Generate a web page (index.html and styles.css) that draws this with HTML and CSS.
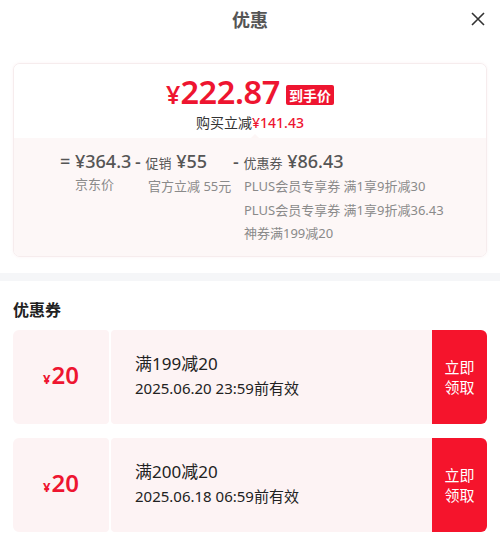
FILE: index.html
```html
<!DOCTYPE html>
<html lang="zh-CN">
<head>
    <meta charset="UTF-8">
    <meta name="viewport" content="width=device-width, initial-scale=1.0">
    <title>优惠</title>
    <link rel="stylesheet" href="styles.css">
</head>
<body>
    <div class="header">
        <h1>优惠</h1>
        <svg class="close" width="16" height="16" viewBox="0 0 16 16">
            <path d="M2 2 L14 14 M14 2 L2 14" stroke="#333" stroke-width="1.6" fill="none"/>
        </svg>
    </div>

    <div class="summary">
        <div class="summary-top">
            <div class="final">
                <span class="yen">¥</span><span class="amount">222.87</span>
                <span class="badge">到手价</span>
            </div>
            <div class="saved">购买立减<span class="red">¥141.43</span></div>
        </div>
        <div class="summary-bottom">
            <div class="calc">
                <div class="col col-jd">
                    <div class="main">= ¥364.3</div>
                    <div class="sub">京东价</div>
                </div>
                <div class="col col-promo">
                    <div class="main">- <small>促销</small> ¥55</div>
                    <div class="sub">官方立减 55元</div>
                </div>
                <div class="col col-coupon">
                    <div class="main">- <small>优惠券</small> ¥86.43</div>
                    <div class="sub">PLUS会员专享券 满1享9折减30</div>
                    <div class="sub">PLUS会员专享券 满1享9折减36.43</div>
                    <div class="sub">神券满199减20</div>
                </div>
            </div>
        </div>
    </div>

    <div class="band"></div>

    <h2>优惠券</h2>

    <div class="coupon">
        <div class="coupon-value"><span class="y">¥</span>20</div>
        <div class="coupon-info">
            <div class="rule">满199减20</div>
            <div class="expire">2025.06.20 23:59前有效</div>
        </div>
        <div class="coupon-btn">立即<br>领取</div>
    </div>

    <div class="coupon">
        <div class="coupon-value"><span class="y">¥</span>20</div>
        <div class="coupon-info">
            <div class="rule">满200减20</div>
            <div class="expire">2025.06.18 06:59前有效</div>
        </div>
        <div class="coupon-btn">立即<br>领取</div>
    </div>
</body>
</html>
```

FILE: styles.css
```css
body {
    margin: 0;
    background: #fff;
    font-family: "Noto Sans", "Noto Sans CJK SC", sans-serif;
    color: #222;
    width: 500px;
}
.header {
    height: 38px;
    display: flex;
    align-items: center;
    justify-content: center;
    position: relative;
}
.header h1 {
    margin: 0;
    font-size: 18px;
    font-weight: bold;
    color: #555;
    font-family: "Noto Sans CJK SC", sans-serif;
}
.close {
    position: absolute;
    right: 14px;
    top: 11px;
}
.summary {
    margin: 25px 13px 0;
    border: 1px solid #f6eced;
    border-radius: 7px;
    overflow: hidden;
    box-shadow: 0 0 3px rgba(240, 200, 205, 0.25);
}
.summary-top {
    height: 74px;
    display: flex;
    flex-direction: column;
    align-items: center;
    background: #fff;
    position: relative;
}
.summary-top::after {
    content: "";
    position: absolute;
    bottom: 0;
    left: 237px;
    border: 4px solid transparent;
    border-bottom-color: #fdf6f6;
}
.final {
    display: flex;
    align-items: baseline;
    color: #ee1530;
    margin-top: 11px;
    height: 34px;
    line-height: 34px;
}
.final .yen {
    font-size: 25px;
    font-weight: 600;
}
.final .amount {
    font-size: 32.5px;
    font-weight: 600;
    letter-spacing: -0.4px;
}
.badge {
    background: #ee1530;
    color: #fff;
    font-family: "Noto Sans CJK SC", sans-serif;
    font-weight: bold;
    font-size: 14px;
    line-height: 20px;
    padding: 0 3px;
    border-radius: 2px;
    margin-left: 6px;
    position: relative;
    top: -3px;
}
.saved {
    margin-top: 4px;
    font-size: 14px;
    color: #333;
    line-height: 20px;
}
.red {
    color: #ee1530;
    font-weight: 500;
}
.summary-bottom {
    background: #fdf7f7;
    padding: 11px 0 10px;
}
.calc {
    display: flex;
    padding-left: 46px;
}
.col .main {
    font-size: 18px;
    font-weight: 500;
    color: #555;
    line-height: 24px;
    white-space: nowrap;
}
.col .main small {
    font-size: 13px;
    font-weight: normal;
}
.col .sub {
    font-size: 13px;
    color: #8a8a8a;
    line-height: 23.5px;
    white-space: nowrap;
}
.col-jd {
    width: 75px;
}
.col-jd .sub {
    padding-left: 15px;
}
.col-promo {
    width: 98px;
}
.col-promo .sub {
    padding-left: 13px;
}
.col-coupon .sub {
    padding-left: 11px;
}
.band {
    height: 8px;
    background: #f5f6f8;
    margin-top: 16px;
}
h2 {
    margin: 17px 13px 10px;
    font-size: 16px;
    font-weight: bold;
    color: #222;
    font-family: "Noto Sans CJK SC", sans-serif;
    line-height: 22px;
}
.coupon {
    margin: 0 13px 14px;
    height: 94px;
    display: flex;
    gap: 2px;
}
.coupon-value {
    width: 96px;
    background: #fdf3f4;
    border-radius: 6px 4px 4px 6px;
    display: flex;
    align-items: baseline;
    justify-content: center;
    padding-top: 28px;
    box-sizing: border-box;
    color: #ee1530;
    font-size: 24px;
    font-weight: 600;
}
.coupon-value .y {
    font-size: 13px;
    font-weight: bold;
    margin-right: 1px;
}
.coupon-info {
    flex: 1;
    background: #fdf3f4;
    border-radius: 4px 0 0 4px;
    padding: 21px 0 0 24px;
}
.rule {
    font-size: 17px;
    line-height: 25px;
    color: #222;
}
.expire {
    font-size: 15px;
    line-height: 25px;
    color: #222;
}
.coupon-btn {
    width: 55px;
    margin-left: -2px;
    background: #f5142c;
    color: #fff;
    border-radius: 0 6px 6px 0;
    display: flex;
    align-items: center;
    justify-content: center;
    text-align: center;
    font-size: 15px;
    line-height: 20px;
    font-family: "Noto Sans CJK SC", sans-serif;
}
```
